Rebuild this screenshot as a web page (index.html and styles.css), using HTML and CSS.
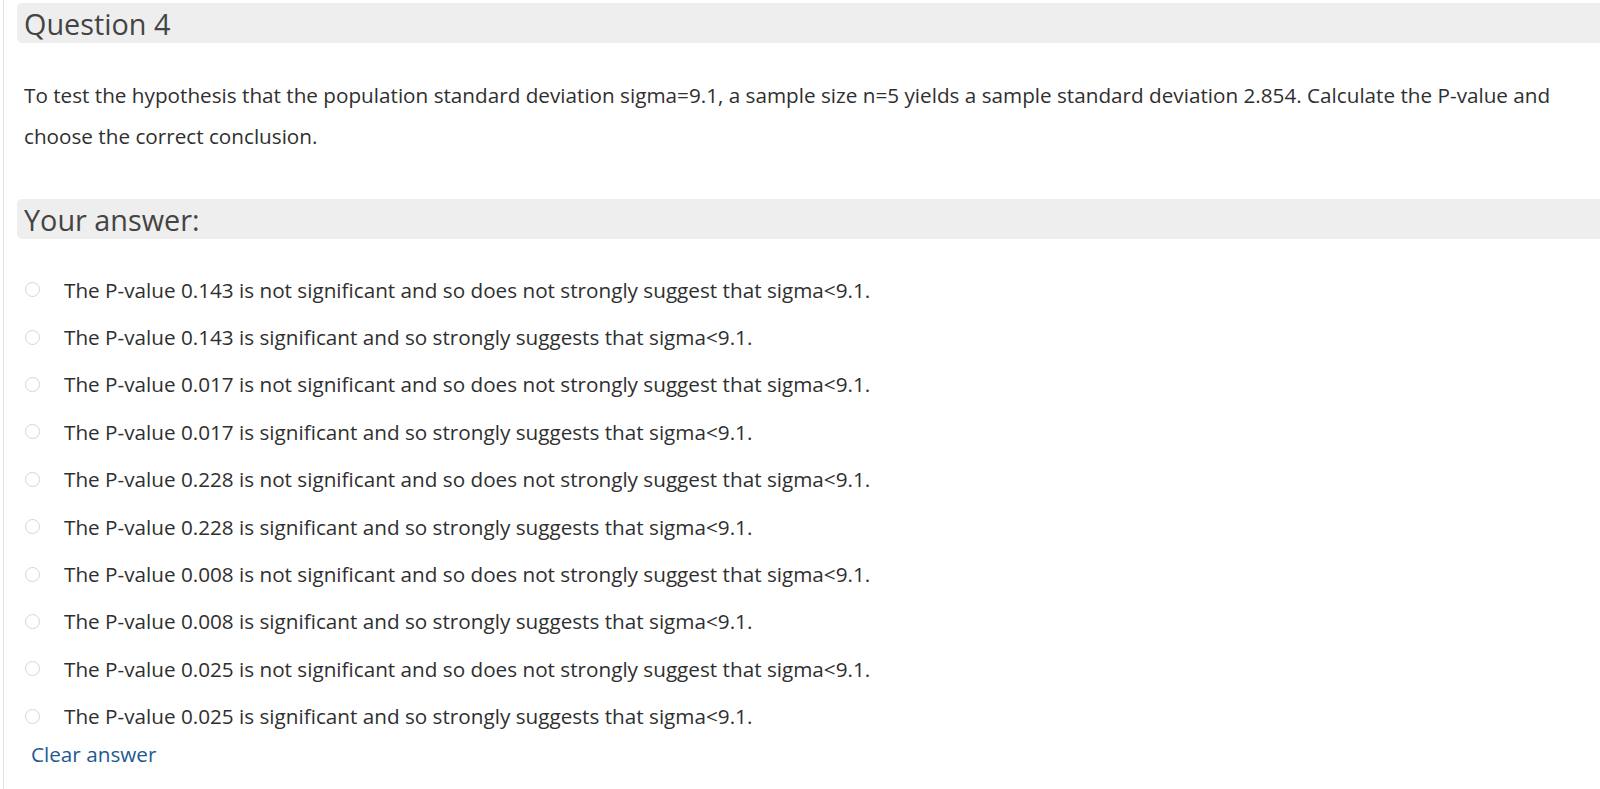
FILE: index.html
```html
<!DOCTYPE html>
<html>
<head>
<meta charset="utf-8">
<link rel="stylesheet" href="styles.css">
</head>
<body>
<div class="page">
  <div class="bar"><span class="bar-title">Question 4</span></div>
  <div class="question">
    <p>To test the hypothesis that the population standard deviation sigma=9.1, a sample size n=5 yields a sample standard deviation 2.854. Calculate the P-value and choose the correct conclusion.</p>
  </div>
  <div class="bar"><span class="bar-title">Your answer:</span></div>
  <ul class="options">
    <li><span class="radio"></span><span>The P-value 0.143 is not significant and so does not strongly suggest that sigma&lt;9.1.</span></li>
    <li><span class="radio"></span><span>The P-value 0.143 is significant and so strongly suggests that sigma&lt;9.1.</span></li>
    <li><span class="radio"></span><span>The P-value 0.017 is not significant and so does not strongly suggest that sigma&lt;9.1.</span></li>
    <li><span class="radio"></span><span>The P-value 0.017 is significant and so strongly suggests that sigma&lt;9.1.</span></li>
    <li><span class="radio"></span><span>The P-value 0.228 is not significant and so does not strongly suggest that sigma&lt;9.1.</span></li>
    <li><span class="radio"></span><span>The P-value 0.228 is significant and so strongly suggests that sigma&lt;9.1.</span></li>
    <li><span class="radio"></span><span>The P-value 0.008 is not significant and so does not strongly suggest that sigma&lt;9.1.</span></li>
    <li><span class="radio"></span><span>The P-value 0.008 is significant and so strongly suggests that sigma&lt;9.1.</span></li>
    <li><span class="radio"></span><span>The P-value 0.025 is not significant and so does not strongly suggest that sigma&lt;9.1.</span></li>
    <li><span class="radio"></span><span>The P-value 0.025 is significant and so strongly suggests that sigma&lt;9.1.</span></li>
  </ul>
  <a class="clear" href="#">Clear answer</a>
</div>
</body>
</html>
```
FILE: styles.css
```css
html, body {
  margin: 0;
  padding: 0;
  background: #fff;
}
body {
  font-family: "Open Sans", "Liberation Sans", sans-serif;
  color: #2f2f2f;
}
.page {
  border-left: 1px solid #e2e2e2;
  margin-left: 3px;
  padding: 3px 0 20px 13px;
  min-height: 766px;
}
.bar {
  background: #eeeeee;
  border-radius: 5px 0 0 5px;
  height: 40px;
  display: flex;
  align-items: center;
  padding-left: 7px;
}
.bar-title {
  font-size: 28.8px;
  color: #444;
  line-height: 40px;
  padding-top: 2px;
}
.question {
  padding: 32px 30px 0 7px;
  height: 124px;
}
.question p {
  margin: 0;
  font-size: 20.7px;
  line-height: 41px;
}
.options {
  list-style: none;
  margin: 0;
  padding: 27px 0 0 8px;
}
.options li {
  display: flex;
  align-items: center;
  height: 47.4px;
  font-size: 20.7px;
}
.radio {
  width: 13px;
  height: 13px;
  border: 1px solid #d6d6d6;
  border-radius: 50%;
  margin-right: 24px;
  background: #fff;
}
.clear {
  display: inline-block;
  margin-left: 14px;
  font-size: 20.7px;
  color: #1d5a93;
  text-decoration: none;
}
```
